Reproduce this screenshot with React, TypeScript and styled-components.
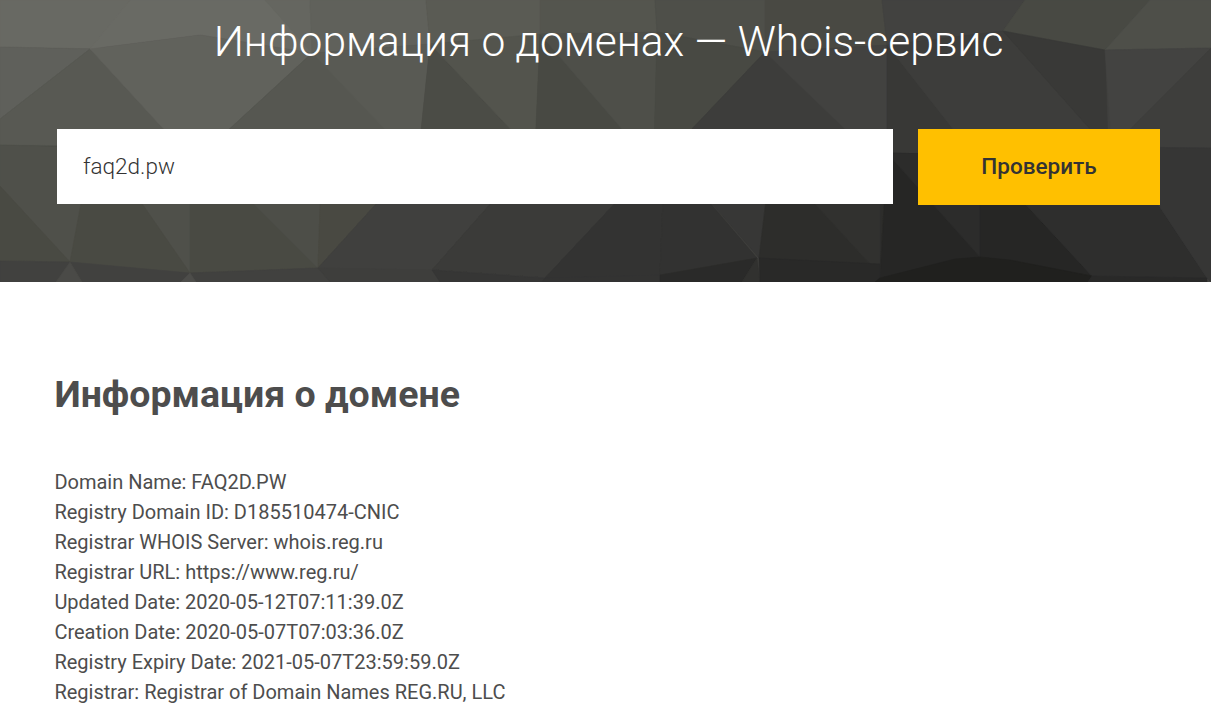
import { FC, FormEvent, useState } from "react";
import styled, { createGlobalStyle } from "styled-components";

const WHOIS_LINES = [
  "Domain Name: FAQ2D.PW",
  "Registry Domain ID: D185510474-CNIC",
  "Registrar WHOIS Server: whois.reg.ru",
  "Registrar URL: https://www.reg.ru/",
  "Updated Date: 2020-05-12T07:11:39.0Z",
  "Creation Date: 2020-05-07T07:03:36.0Z",
  "Registry Expiry Date: 2021-05-07T23:59:59.0Z",
  "Registrar: Registrar of Domain Names REG.RU, LLC",
];

// [points, fill], painted in order
const FACETS: [string, string][] = [
  // top row
  ["0,0 130,0 100,49 0,47", "#686963"],
  ["130,0 310,0 312,53 200,35 90,49", "#696a64"],
  ["265,0 310,0 312,53", "#656660"],
  ["310,0 426,0 430,44 312,53", "#60615b"],
  ["426,0 540,0 540,35 430,44", "#5a5b54"],
  ["540,0 655,0 657,32 540,34", "#54554e"],
  ["655,0 765,0 765,52 657,32", "#4e4f49"],
  ["765,0 882,0 887,45 765,52", "#494943"],
  ["882,0 1025,0 1003,31 887,45", "#424240"],
  ["1025,0 1150,0 1105,50 1003,31", "#484943"],
  ["1150,0 1211,0 1211,48 1105,50", "#4e4f49"],
  // second row
  ["0,47 90,49 0,119", "#5f605b"],
  ["0,119 90,49 180,147 0,145", "#585953"],
  ["90,49 200,35 312,53 210,147 180,147", "#61625c"],
  ["312,53 210,147 405,147", "#565751"],
  ["312,53 430,44 419,150 405,150", "#595a54"],
  ["430,44 419,150 530,150", "#4b4c46"],
  ["430,44 540,34 535,150 530,150", "#53544d"],
  ["540,34 535,150 640,150", "#484943"],
  ["540,34 657,32 654,150 640,150", "#4e4f49"],
  ["657,32 765,52 672,150 654,150", "#484943"],
  ["765,52 672,150 870,150", "#3d3d3b"],
  ["765,52 887,45 887,153 870,153", "#424240"],
  ["887,45 887,153 975,157", "#383836"],
  ["887,45 1003,31 1115,150 975,157", "#3d3d3b"],
  ["1003,31 1105,50 1108,146 1105,146", "#393937"],
  ["1105,50 1211,48 1112,148", "#434341"],
  ["1211,48 1211,148 1112,148", "#3e3e3c"],
  // third row
  ["0,145 190,150 190,273 0,261", "#4f504a"],
  ["0,186 70,262 0,261", "#494a43"],
  ["91,150 105,150 190,273 70,262", "#494a43"],
  ["190,150 200,150 318,268 190,273", "#494a43"],
  ["200,150 322,150 318,268", "#4d4e48"],
  ["322,150 425,150 318,268", "#494942"],
  ["425,150 538,150 432,270 318,268", "#40403e"],
  ["538,150 665,150 545,278 432,270", "#3b3b39"],
  ["665,150 660,275 545,278", "#333332"],
  ["665,150 757,258 660,275", "#323231"],
  ["665,150 772,150 759,258", "#373736"],
  ["772,150 887,153 880,278 759,258", "#2d2d2b"],
  ["772,150 815,204 880,275 880,150", "#31312f"],
  ["887,153 980,155 980,257 880,278", "#262625"],
  ["887,153 980,155 980,257", "#2c2c2b"],
  ["980,155 1092,276 980,257", "#262625"],
  ["980,155 1120,147 1207,278 1092,276", "#2e2e2d"],
  ["1120,147 1211,148 1211,282 1207,278", "#363635"],
  // bottom edge
  ["0,261 70,262 190,273 318,268 432,270 545,278 545,282 0,282", "#41413f"],
  ["318,268 432,270 545,278 545,282 330,282", "#3e3e3c"],
  ["432,270 545,278 545,282 440,282", "#363635"],
  ["545,278 660,275 660,282 542,282", "#333332"],
  ["70,262 82,282 56,282", "#4a4a47"],
  ["190,273 196,282 181,282", "#4d4d4a"],
  ["660,275 757,258 742,282 660,282", "#2a2a29"],
  ["757,258 760,282 742,282", "#31312f"],
  ["759,258 880,264 880,282 760,282", "#292928"],
  ["880,278 955,259 980,257 1010,260 1092,276 1088,282 875,282", "#20201e"],
  ["1092,276 1207,278 1207,282 1088,282", "#292928"],
];

const HeroBackground: FC = () => (
  <Facets viewBox="0 0 1211 282" preserveAspectRatio="none" aria-hidden="true">
    {FACETS.map(([points, fill]) => (
      <polygon
        key={points}
        points={points}
        fill={fill}
        stroke={fill}
        strokeWidth={0.6}
      />
    ))}
  </Facets>
);

const App: FC = () => {
  const [domain, setDomain] = useState("faq2d.pw");

  const onSubmit = (e: FormEvent<HTMLFormElement>) => e.preventDefault();

  return (
    <>
      <GlobalStyle />
      <Hero>
        <HeroBackground />
        <HeroTitle>Информация о доменах — Whois-сервис</HeroTitle>
        <SearchForm onSubmit={onSubmit}>
          <DomainInput
            value={domain}
            spellCheck={false}
            onChange={(e) => setDomain(e.target.value)}
          />
          <CheckButton type="submit">Проверить</CheckButton>
        </SearchForm>
      </Hero>
      <Result>
        <ResultTitle>Информация о домене</ResultTitle>
        <WhoisList>
          {WHOIS_LINES.map((line) => (
            <WhoisLine key={line}>{line}</WhoisLine>
          ))}
        </WhoisList>
      </Result>
    </>
  );
};

export default App;

const GlobalStyle = createGlobalStyle`
  * {
    box-sizing: border-box;
  }
  html, body {
    margin: 0;
    height: 711px;
    overflow: hidden;
    background: #fff;
    font-family: Roboto, "Liberation Sans", sans-serif;
  }
`;

const Hero = styled.header`
  position: relative;
  isolation: isolate;
  height: 282px;
  padding: 17px 51px 0 57px;
  overflow: hidden;
  background: #40403e;
`;

const Facets = styled.svg`
  position: absolute;
  inset: 0;
  z-index: -1;
  width: 100%;
  height: 100%;
`;

const HeroTitle = styled.h1`
  margin: 0 0 62px;
  color: #fff;
  font-size: 42.5px;
  font-weight: 300;
  line-height: 50px;
  text-align: center;
  white-space: nowrap;
`;

const SearchForm = styled.form`
  display: flex;
  align-items: flex-start;
  gap: 25px;
`;

const DomainInput = styled.input`
  flex: 1;
  min-width: 0;
  height: 75px;
  padding: 0 26px 2px;
  border: 0;
  border-radius: 0;
  outline: 0;
  background: #fff;
  color: #333;
  font-family: inherit;
  font-size: 22.5px;
  font-weight: 300;
`;

const CheckButton = styled.button`
  width: 242px;
  height: 76px;
  padding: 0 0 2px;
  border: 0;
  background: #ffc000;
  color: #333;
  font-family: inherit;
  font-size: 22.5px;
  font-weight: 500;
  cursor: pointer;
`;

const Result = styled.main`
  padding: 89px 54px 0 54.4px;
  color: #4d4d4d;
`;

const ResultTitle = styled.h2`
  margin: 0 0 50px;
  font-size: 37.5px;
  font-weight: 700;
  line-height: 46px;
`;

const WhoisList = styled.ul`
  margin: 0;
  padding: 0;
  list-style: none;
`;

const WhoisLine = styled.li`
  font-size: 20px;
  line-height: 30px;
`;
